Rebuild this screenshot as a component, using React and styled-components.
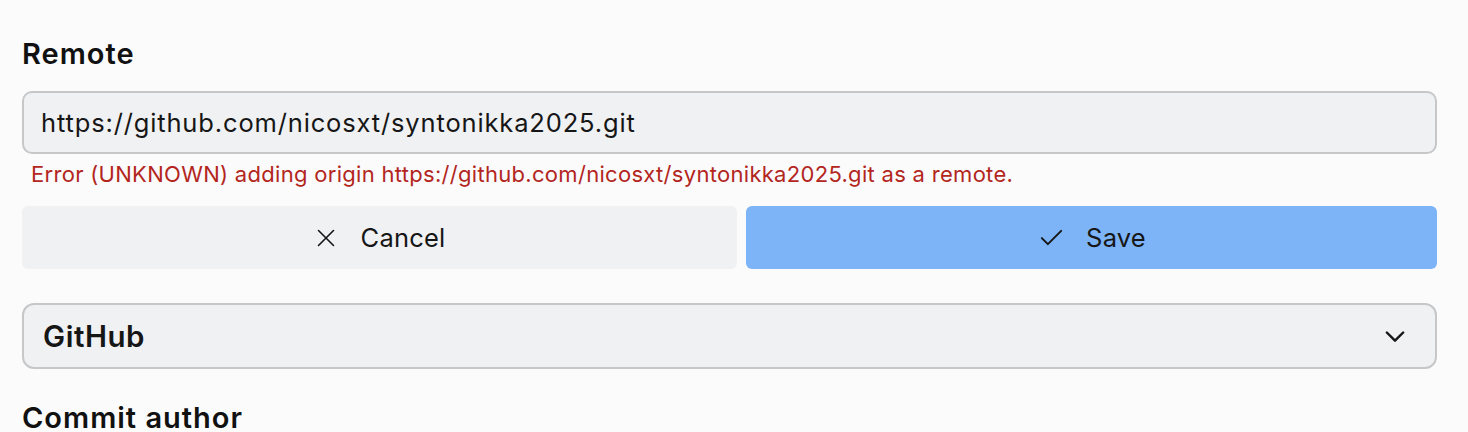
import React from 'react'
import styled, { createGlobalStyle } from 'styled-components'

const Global = createGlobalStyle`
  html, body { margin: 0; background: #fbfbfb; }
  body { font-family: "Inter", "Noto Sans", sans-serif; color: #161616; }
`;

const Page = styled.div`
  padding: 34px 31px 0 22px;
  display: flex;
  flex-direction: column;
`;

const Heading = styled.h2`
  margin: ${p => p.$top || 0}px 0 ${p => p.$gap || 0}px;
  font-size: 29px;
  font-weight: 600;
  letter-spacing: 1px;
  line-height: 40px;
  color: #111;
`;

const Input = styled.input`
  box-sizing: border-box;
  height: 63px;
  width: 100%;
  border: 2px solid #c6c7c9;
  border-radius: 10px;
  background: #f0f1f3;
  padding: 0 17px;
  font: inherit;
  font-size: 25.5px;
  letter-spacing: 0.85px;
  color: #161616;
  outline: none;
`;

const ErrorText = styled.p`
  margin: 5px 0 0 9px;
  font-size: 22px;
  letter-spacing: 0.3px;
  line-height: 30px;
  color: #b3261e;
`;

const ButtonRow = styled.div`
  display: grid;
  grid-template-columns: 715px 1fr;
  gap: 9px;
  margin-top: 17px;
`;

const Button = styled.button`
  height: 63px;
  border: none;
  border-radius: 6px;
  background: ${p => (p.$primary ? '#7db3f7' : '#f0f1f3')};
  color: #161616;
  font: inherit;
  font-size: 25.5px;
  letter-spacing: 0.2px;
  display: flex;
  align-items: center;
  justify-content: center;
  gap: ${p => (p.$primary ? 20 : 23)}px;
  cursor: pointer;
`;

const Select = styled.div`
  box-sizing: border-box;
  margin-top: 34px;
  height: 66px;
  border: 2px solid #c6c7c9;
  border-radius: 12px;
  background: #f0f1f3;
  display: flex;
  align-items: center;
  justify-content: space-between;
  padding: 0 26px 0 19px;
  font-size: 29.5px;
  font-weight: 600;
  letter-spacing: 0.55px;
`;

const Icon = ({ children, size = 24 }) => (
  <svg width={size} height={size} viewBox="0 0 24 24" fill="none" stroke="#161616" strokeWidth="1.6" strokeLinecap="round" strokeLinejoin="round">
    {children}
  </svg>
);

export default function App() {
  return (
    <>
      <Global />
      <Page>
        <Heading $gap={17}>Remote</Heading>
        <Input defaultValue="https://github.com/nicosxt/syntonikka2025.git" />
        <ErrorText>Error (UNKNOWN) adding origin https://github.com/nicosxt/syntonikka2025.git as a remote.</ErrorText>
        <ButtonRow>
          <Button>
            <Icon size={24}><path d="M4.5 4.5l15 15M19.5 4.5l-15 15" /></Icon>
            Cancel
          </Button>
          <Button $primary>
            <Icon size={29}><path d="M4 12.5l5 5L20 6.5" /></Icon>
            Save
          </Button>
        </ButtonRow>
        <Select>
          GitHub
          <Icon size={28}><path d="M5 9l7 7 7-7" strokeWidth="2.1" /></Icon>
        </Select>
        <Heading $top={29}>Commit author</Heading>
      </Page>
    </>
  )
}
